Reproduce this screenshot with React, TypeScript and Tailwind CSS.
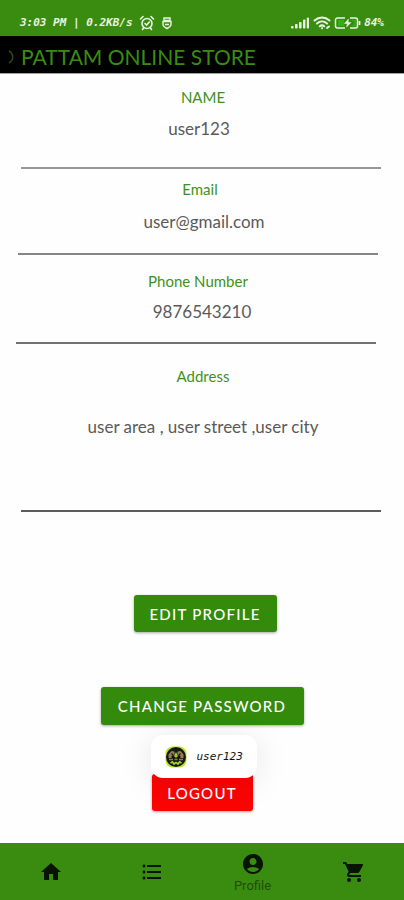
import { MdAccountCircle, MdFormatListBulleted, MdHome, MdShoppingCart } from "react-icons/md";

const hand = "font-['DejaVu_Sans_Mono',monospace] italic";

function AlarmIcon() {
  return (
    <svg viewBox="0 0 16 16" className="h-4 w-4" fill="none" stroke="currentColor" strokeWidth="1.6" strokeLinecap="round" aria-hidden="true">
      <circle cx="8" cy="8.5" r="5" />
      <path d="M1.5 4 4 1.5M14.5 4 12 1.5M6 8.5l1.6 1.6L10.3 7M4.5 13l-1 1.5M11.5 13l1 1.5" />
    </svg>
  );
}

function ShieldIcon() {
  return (
    <svg viewBox="0 0 12 14" className="h-3.5 w-3" fill="none" stroke="currentColor" strokeWidth="1.4" aria-hidden="true">
      <path d="M3 2h6v2.5H3zM2 5.5h8v3c0 2-2 3-4 4-2-1-4-2-4-4zM4 8.500h4" />
    </svg>
  );
}

function SignalIcon() {
  return (
    <svg viewBox="0 0 20 14" className="h-3.5 w-5" fill="currentColor" aria-hidden="true">
      <rect x="1" y="10" width="2.6" height="2.5" rx="0.8" />
      <rect x="5" y="8" width="2.6" height="4.5" rx="0.8" />
      <rect x="9" y="6" width="2.6" height="6.5" rx="0.8" />
      <rect x="13" y="3.5" width="2.4" height="9" rx="0.8" />
      <rect x="16.8" y="1.5" width="2.2" height="11" rx="0.8" />
    </svg>
  );
}

function WifiIcon() {
  return (
    <svg viewBox="0 0 18 14" className="h-3.5 w-[18px]" fill="none" stroke="currentColor" strokeWidth="2" strokeLinecap="round" aria-hidden="true">
      <path d="M1.5 4.500c4.500-4 10.500-4 15 0M4 7.500c3-2.600 7-2.600 10 0M6.800 10.300c1.400-1.200 3-1.200 4.400 0M9 12.300h.1M14 12l2-1.500" />
    </svg>
  );
}

function BatteryIcon() {
  return (
    <svg viewBox="0 0 27 14" className="h-3.5 w-[27px]" fill="none" stroke="currentColor" strokeWidth="1.5" aria-hidden="true">
      <path d="M4 4h6v6H4z" fill="#2fb012" stroke="none" />
      <path d="M11 2H3.500a2 2 0 0 0-2 2v6a2 2 0 0 0 2 2H11M16 2h5.500a2 2 0 0 1 2 2v6a2 2 0 0 1-2 2H16" />
      <path d="M25.500 5v4" strokeWidth="1.800" />
      <path d="M14.500 3 10.500 7.500h3L12.500 11 17 6.500h-3z" fill="currentColor" strokeWidth="0.500" />
      <path d="M18 4.500h3v5h-3" stroke="#2fb012" />
    </svg>
  );
}

function StoreLogo() {
  return (
    <svg viewBox="0 0 22 22" className="h-[22px] w-[22px]" aria-hidden="true">
      <rect x="0.5" y="0.5" width="21" height="21" rx="7" fill="#b8e52c" />
      <circle cx="11" cy="11" r="10" fill="#17170f" />
      <path d="M3.500 12V8.500l3-3.500 3 .500v3l-3 1.500v2zM18.500 12V8.500l-3-3.500-3 .500v3l3 1.500v2z" fill="#9a7d5c" />
      <path d="M11 6 13 10l-2 2-2-2z" fill="#9ccc35" />
      <path d="M6.500 7.500 8 9M15.500 7.500 14 9" stroke="#17170f" strokeWidth="1.200" />
      <path d="M4 13.500h4M9.500 13.500h3M14 13.500h4" stroke="#8c7a5f" strokeWidth="1.400" />
      <path d="M5.500 17 7.500 16l1.500 2 2-1.500 2 1.500 1.500-2 2 1" fill="none" stroke="#9bd32b" strokeWidth="1.800" />
    </svg>
  );
}

const fields = [
  { label: "NAME", value: "user123", box: "ml-[21px] mr-[23px] pt-[13px] pb-[26px] gap-[10px] border-[#969696]", text: "pr-1" },
  { label: "Email", value: "user@gmail.com", box: "ml-[18px] mr-[26px] pt-[10px] pb-[19px] gap-[11px] border-[#858585]", text: "pl-3" },
  { label: "Phone Number", value: "9876543210", box: "ml-4 mr-7 pt-4 pb-[18px] gap-[9px] border-[#727272]", text: "pl-3" },
  { label: "Address", value: "user area , user street ,user city", box: "ml-[21px] mr-[23px] pt-[22px] pb-[71px] gap-[29px] border-[#5c5c5c]", text: "pl-1" },
];

const tabs = [
  { name: "Home", Icon: MdHome, active: false },
  { name: "Orders", Icon: MdFormatListBulleted, active: false },
  { name: "Profile", Icon: MdAccountCircle, active: true },
  { name: "Cart", Icon: MdShoppingCart, active: false },
];

const button = "rounded-[3px] text-[15px] leading-5 font-medium tracking-[1.25px] text-white shadow-[0_1px_3px_rgba(0,0,0,0.35)]";

export default function App() {
  return (
    <div className="flex min-h-screen flex-col bg-[#fefefe] font-[Lato,'Noto_Sans',sans-serif]">
      <div className="flex h-9 items-end justify-between bg-[#3a8c11] px-5 pb-[5px] text-[#e9f5e2]">
        <div className="flex items-center gap-1.5">
          <span className={`${hand} text-[11px] leading-4 font-bold whitespace-pre`}>3:03 PM | 0.2KB/s</span>
          <AlarmIcon />
          <ShieldIcon />
        </div>
        <div className="flex items-center gap-[3px]">
          <SignalIcon />
          <WifiIcon />
          <BatteryIcon />
          <span className={`${hand} text-[11px] leading-4 font-bold`}>84%</span>
        </div>
      </div>

      <header className="flex h-[38px] items-center gap-1.5 border-b border-[#a0a0a0] bg-black pt-1 pl-[7px] text-[#3a8c11]">
        <svg viewBox="0 0 8 16" className="h-4 w-2" fill="none" stroke="#2c4a1a" strokeWidth="1.5" aria-hidden="true">
          <path d="M2 2c5 3 5 9 0 12" />
        </svg>
        <h1 className="text-[21px] leading-7 whitespace-nowrap">PATTAM ONLINE STORE</h1>
      </header>

      <main className="flex flex-1 flex-col">
        <dl>
          {fields.map((f) => (
            <div key={f.label} className={`flex flex-col border-b-2 text-center ${f.box}`}>
              <dt className="pl-1 text-[15px] leading-5 text-[#3f9222]">{f.label}</dt>
              <dd className={`text-[17px] leading-6 text-[#5a5a5a] ${f.text}`}>{f.value}</dd>
            </div>
          ))}
        </dl>

        <div className="flex flex-col items-center pt-[83px] pb-8">
          <button type="button" className={`${button} ml-1.5 h-[37px] w-[143px] bg-[#338a0b]`}>EDIT PROFILE</button>
          <button type="button" className={`${button} mt-[55px] h-[38px] w-[203px] bg-[#338a0b]`}>CHANGE PASSWORD</button>
          <div className="relative mt-[49px]">
            <button type="button" className={`${button} h-[37px] w-[101px] bg-[#fb0404]`}>LOGOUT</button>
            <div role="status" className="absolute bottom-[33px] -left-px flex h-[43px] w-[106px] items-center gap-2.5 rounded-xl bg-white pl-3.5 shadow-[0_4px_32px_rgba(0,0,0,0.1)]">
              <StoreLogo />
              <span className={`${hand} text-[11px] leading-4 text-[#111]`}>user123</span>
            </div>
          </div>
        </div>
      </main>

      <nav className="grid h-[57px] grid-cols-4 bg-[#3a8c11]">
        {tabs.map(({ name, Icon, active }) => (
          <a key={name} href={`#${name.toLowerCase()}`} aria-label={name} className={`flex flex-col items-center justify-center text-[#081402] ${active ? "pt-1" : ""}`}>
            <Icon className="h-6 w-6" />
            {active && <span className="font-[Roboto,sans-serif] text-[13px] leading-5 text-[#1f4d0a]">{name}</span>}
          </a>
        ))}
      </nav>
    </div>
  );
}
